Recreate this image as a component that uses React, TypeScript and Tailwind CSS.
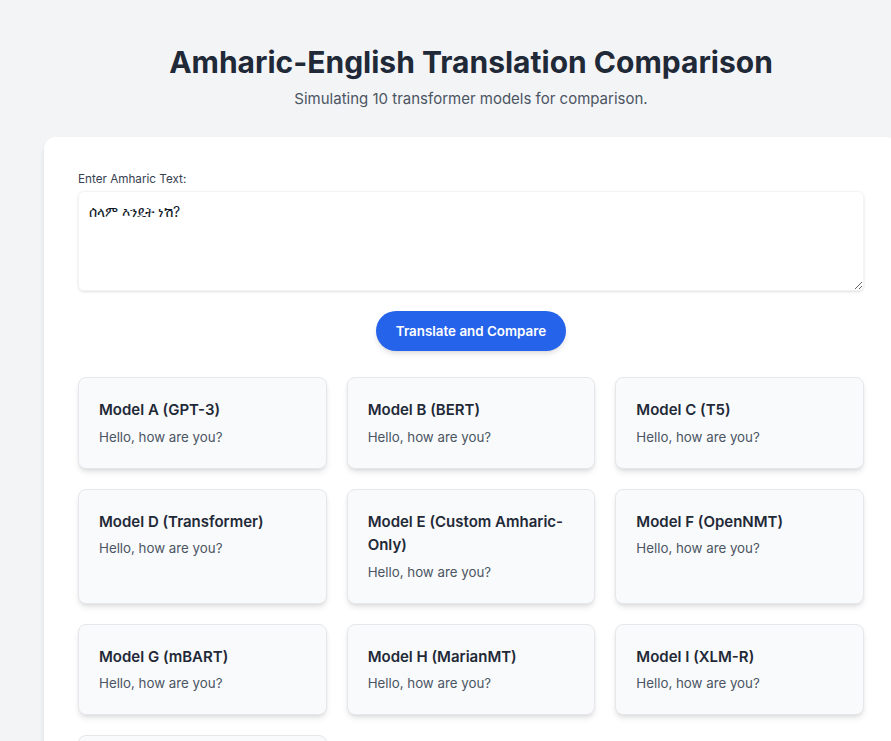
import React, { useState } from "react";

const models = [
  "Model A (GPT-3)",
  "Model B (BERT)",
  "Model C (T5)",
  "Model D (Transformer)",
  "Model E (Custom Amharic-Only)",
  "Model F (OpenNMT)",
  "Model G (mBART)",
  "Model H (MarianMT)",
  "Model I (XLM-R)",
  "Model J (M2M-100)",
];

export default function App() {
  const [text, setText] = useState("ሰላም እንዴት ነሽ?");

  return (
    <div className="min-h-screen overflow-hidden bg-[#f3f4f6] font-['Inter','Noto_Sans',sans-serif]">
      <div className="ml-[44px] w-[854px] pt-[44px]">
        <h1 className="mb-2 text-center text-3xl font-bold text-[#1f2937]">
          Amharic-English Translation Comparison
        </h1>
        <p className="mb-[27px] text-center text-[15px] leading-[22px] text-[#4b5563]">
          Simulating 10 transformer models for comparison.
        </p>

        <div className="rounded-xl bg-white p-[34px] shadow-md">
          <label className="mb-1 block text-[11.7px] leading-4 text-[#374151]">Enter Amharic Text:</label>
          <textarea
            className="block h-[100px] w-full rounded-md border border-[#f3f4f6] p-2.5 text-sm text-[#111827] shadow-sm outline-none"
            value={text}
            onChange={e => setText(e.target.value)}
          />
          <div className="mt-5 flex justify-center">
            <button className="h-10 w-[190px] rounded-full bg-[#2563eb] text-[13.4px] font-semibold text-white shadow-md">
              Translate and Compare
            </button>
          </div>

          <div className="mt-[26px] grid grid-cols-3 gap-5">
            {models.map((m, i) => (
              <div key={i} className="rounded-lg border border-[#e5e7eb] bg-[#f9fafb] p-5 shadow-md">
                <h3 className="mb-[5px] text-[15px] leading-[23.5px] font-semibold text-[#1f2937]">{m}</h3>
                <p className="text-[13.3px] leading-[21px] text-[#4b5563]">Hello, how are you?</p>
              </div>
            ))}
          </div>
        </div>
      </div>
    </div>
  );
}
